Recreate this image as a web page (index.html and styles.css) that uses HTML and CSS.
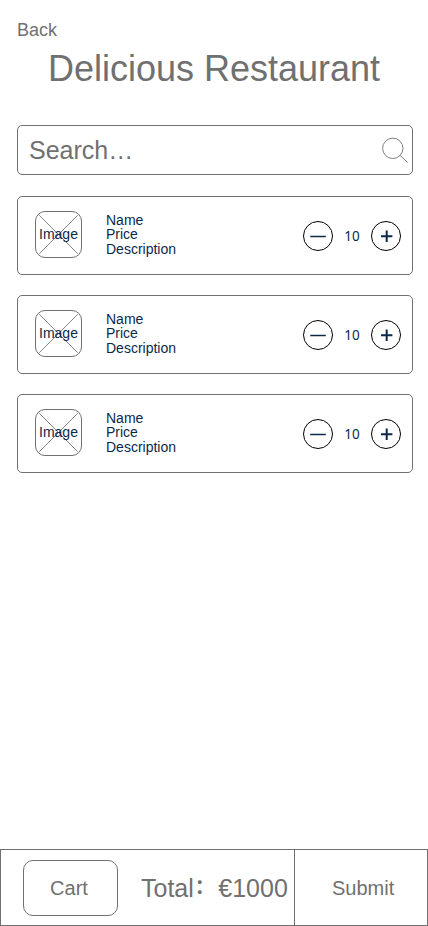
FILE: index.html
```html
<!DOCTYPE html>
<html lang="en">
<head>
<meta charset="utf-8">
<title>Delicious Restaurant</title>
<link rel="stylesheet" href="styles.css">
</head>
<body>
<div class="page">
  <header class="header">
    <a class="back">Back</a>
    <h1 class="title">Delicious Restaurant</h1>
  </header>
  <main class="content">
    <div class="search">
      <span class="search-text">Search…</span>
      <svg class="search-icon" width="28" height="28" viewBox="0 0 28 28"><circle cx="11.8" cy="12.3" r="10.2"/><path d="M19.1 19.4L26.7 26.5"/></svg>
    </div>
    <article class="item">
      <div class="thumb"><svg class="cross" viewBox="0 0 47 47"><path d="M3.5 3.5L43.5 43.5M43.5 3.5L3.5 43.5"/></svg><span class="thumb-label">Image</span></div>
      <div class="info"><div>Name</div><div>Price</div><div class="description">Description</div></div>
      <div class="stepper">
        <svg class="round" viewBox="0 0 30 30"><circle cx="15" cy="15" r="14.5"/><path class="minus" d="M7.2 15.5H22.8"/></svg>
        <span class="count">10</span>
        <svg class="round" viewBox="0 0 30 30"><circle cx="15" cy="15" r="14.5"/><path class="plus" d="M10 15.2H21.4M15.7 9.5V21"/></svg>
      </div>
    </article>
    <article class="item">
      <div class="thumb"><svg class="cross" viewBox="0 0 47 47"><path d="M3.5 3.5L43.5 43.5M43.5 3.5L3.5 43.5"/></svg><span class="thumb-label">Image</span></div>
      <div class="info"><div>Name</div><div>Price</div><div class="description">Description</div></div>
      <div class="stepper">
        <svg class="round" viewBox="0 0 30 30"><circle cx="15" cy="15" r="14.5"/><path class="minus" d="M7.2 15.5H22.8"/></svg>
        <span class="count">10</span>
        <svg class="round" viewBox="0 0 30 30"><circle cx="15" cy="15" r="14.5"/><path class="plus" d="M10 15.2H21.4M15.7 9.5V21"/></svg>
      </div>
    </article>
    <article class="item">
      <div class="thumb"><svg class="cross" viewBox="0 0 47 47"><path d="M3.5 3.5L43.5 43.5M43.5 3.5L3.5 43.5"/></svg><span class="thumb-label">Image</span></div>
      <div class="info"><div>Name</div><div>Price</div><div class="description">Description</div></div>
      <div class="stepper">
        <svg class="round" viewBox="0 0 30 30"><circle cx="15" cy="15" r="14.5"/><path class="minus" d="M7.2 15.5H22.8"/></svg>
        <span class="count">10</span>
        <svg class="round" viewBox="0 0 30 30"><circle cx="15" cy="15" r="14.5"/><path class="plus" d="M10 15.2H21.4M15.7 9.5V21"/></svg>
      </div>
    </article>
  </main>
  <footer class="footer">
    <div class="summary">
      <div class="cart">Cart</div>
      <div class="total"><span>Total</span><span class="colon">：</span><span>€1000</span></div>
    </div>
    <div class="submit">Submit</div>
  </footer>
</div>
</body>
</html>
```
FILE: styles.css
```css
* {
  box-sizing: border-box;
}

body {
  margin: 0;
  background: #fff;
  color: #707070;
  font-family: "Liberation Sans", "Noto Sans CJK SC", sans-serif;
}

.page {
  display: flex;
  flex-direction: column;
  height: 926px;
}

.header {
  height: 125px;
  padding-top: 20px;
}

.back {
  display: block;
  padding-left: 17px;
  font-size: 18px;
  line-height: 20px;
}

.title {
  margin: 8px 0 0;
  font-size: 36px;
  font-weight: 400;
  line-height: 41px;
  text-align: center;
}

.content {
  flex: 1;
  padding: 0 15px 0 17px;
}

.search {
  display: flex;
  align-items: center;
  justify-content: space-between;
  height: 50px;
  margin-bottom: 21px;
  padding: 0 3px 0 11px;
  border: 1px solid #707070;
  border-radius: 5px;
}

.search-text {
  font-size: 25px;
  line-height: 28px;
}

.search-icon {
  fill: none;
  stroke: #808080;
}

.item {
  display: flex;
  align-items: center;
  height: 79px;
  margin-bottom: 20px;
  padding: 0 11px 0 17px;
  border: 1px solid #707070;
  border-radius: 5px;
  color: #0b294b;
  font-size: 14px;
}

.thumb {
  display: grid;
  place-items: center;
  width: 47px;
  height: 47px;
  margin-top: -2px;
}

.thumb > * {
  grid-area: 1 / 1;
}

.cross {
  width: 47px;
  height: 47px;
  border: 1px solid #707070;
  border-radius: 10px;
  fill: none;
  stroke: #808080;
}

.thumb-label {
  padding-bottom: 2px;
  line-height: 16px;
}

.info {
  flex: 1;
  margin: -3px 0 0 24px;
  line-height: 14px;
}

.description {
  padding-top: 1px;
}

.stepper {
  display: flex;
  align-items: center;
  gap: 11px;
}

.round {
  width: 30px;
  height: 30px;
  fill: none;
  stroke: #000;
}

.minus,
.plus {
  stroke: #0b294b;
  stroke-width: 1.5;
}

.plus {
  stroke-width: 2;
}

.count {
  width: 16px;
  font-family: "Noto Sans", sans-serif;
  font-size: 13.5px;
  line-height: 18px;
  text-align: center;
}

.footer {
  display: flex;
  height: 77px;
  border: 1px solid #707070;
}

.summary {
  display: flex;
  align-items: center;
  width: 294px;
  padding-left: 22px;
  border-right: 1px solid #707070;
}

.cart {
  width: 95px;
  height: 56px;
  border: 1px solid #707070;
  border-radius: 10px;
  font-size: 20px;
  line-height: 55px;
  text-align: center;
  padding-right: 3px;
}

.total {
  display: flex;
  margin-left: 23px;
  font-size: 25px;
  line-height: 28px;
  white-space: nowrap;
}

.colon {
  width: 24.5px;
  padding-left: 1px;
  font-size: 20px;
  font-weight: 700;
  line-height: 26px;
}

.submit {
  flex: 1;
  padding-left: 37px;
  font-size: 20px;
  line-height: 76px;
}
```
